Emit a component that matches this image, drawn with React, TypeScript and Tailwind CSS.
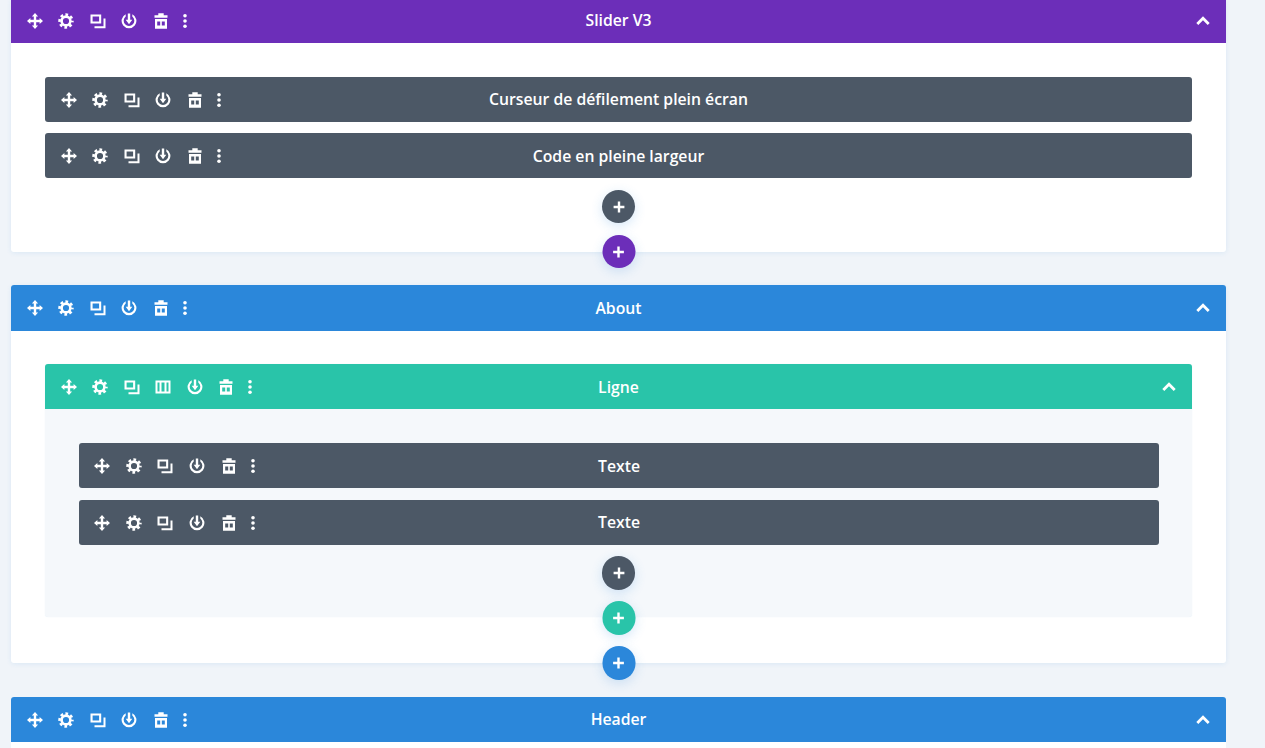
import type { ReactNode } from "react";

function Icon({ children }: { children: ReactNode }) {
  return <svg width="16" height="16" viewBox="0 0 16 16" fill="currentColor" className="block">{children}</svg>;
}

const MoveIcon = () => (
  <Icon>
    <path d="M6.800 3.400h2.400v3.400h3.400V4.900L16 8l-3.400 3.100V9.200H9.200v3.400h1.900L8 16l-3.100-3.400h1.900V9.200H3.400v1.900L0 8l3.400-3.100v1.900h3.400V3.400H4.900L8 0l3.100 3.400H9.200z" />
  </Icon>
);
const GearIcon = () => (
  <Icon>
    <circle cx="8" cy="8" r="4.400" fill="none" stroke="currentColor" strokeWidth="2.600" />
    <circle cx="8" cy="8" r="6.400" fill="none" stroke="currentColor" strokeWidth="2.600" strokeDasharray="2.700 2.326" strokeDashoffset="1.350" />
  </Icon>
);
const CopyIcon = () => (
  <Icon>
    <path fillRule="evenodd" d="M.5 1.500h10.700v9H.5zm2.100 2v5h6.500v-5z" />
    <path d="M13.500 5.500h2v9.800H4.500v-2h9z" />
  </Icon>
);
const ColumnsIcon = () => (
  <Icon>
    <path fillRule="evenodd" d="M.5 1.500h15v13H.5zm2 2v9h2v-9zm4 0v9h3v-9zm5 0v9h2v-9z" />
  </Icon>
);
const PowerIcon = () => (
  <Icon>
    <path d="M4.700 1.300v2.200a5.300 5.300 0 1 0 6.600 0V1.300a7.400 7.400 0 1 1-6.600 0z" />
    <path d="M6.800.5h2.400v6.300h2.100L8 11.300 4.700 6.800h2.100z" />
  </Icon>
);
const TrashIcon = () => (
  <Icon>
    <path d="M5.300.3h5.400v2h3.800v2.400h-13V2.300h3.800z" />
    <path fillRule="evenodd" d="M2 6h12v9.700H2zm2.200 2.600v3.900h3V8.600zm4.600 0v3.900h3V8.600z" />
  </Icon>
);
const DotsIcon = () => (
  <Icon>
    <circle cx="8" cy="2.700" r="1.800" />
    <circle cx="8" cy="8" r="1.800" />
    <circle cx="8" cy="13.300" r="1.800" />
  </Icon>
);
const ChevronIcon = () => (
  <svg width="16" height="16" viewBox="0 0 16 16" fill="none" stroke="currentColor" strokeWidth="2.800" className="block">
    <path d="M2.300 11 8 5.300l5.700 5.700" />
  </svg>
);

function Tool({ children, w }: { children: ReactNode; w: string }) {
  return <span className={`flex justify-center ${w}`}>{children}</span>;
}

function Toolbar({ columns = false, wide = false }: { columns?: boolean; wide?: boolean }) {
  const w = wide ? "w-[31.800px]" : "w-[31.500px]";
  return (
    <div className="flex items-center text-white">
      <Tool w={w}><MoveIcon /></Tool>
      <Tool w={w}><GearIcon /></Tool>
      <Tool w={w}><CopyIcon /></Tool>
      {columns && <Tool w={w}><ColumnsIcon /></Tool>}
      <Tool w={w}><PowerIcon /></Tool>
      <Tool w={w}><TrashIcon /></Tool>
      <span className="flex w-[16px] justify-center"><DotsIcon /></span>
    </div>
  );
}

function Bar({ title, tone, columns, rounded, indent = "pl-2", wide, collapse, high, h = "h-[45px]" }: { title: string; tone: string; columns?: boolean; rounded?: boolean; indent?: string; wide?: boolean; collapse?: boolean; high?: boolean; h?: string }) {
  return (
    <div className={`grid shrink-0 grid-cols-[1fr_auto_1fr] items-center ${h} ${tone} ${rounded ? "rounded-t-[3px]" : ""}`}>
      <div className={indent}><Toolbar columns={columns} wide={wide} /></div>
      <span className={`text-[15.750px] font-semibold text-white ${high ? "" : "pt-[2px]"}`}>{title}</span>
      {collapse ? <span className="flex justify-end pr-[15px] text-white"><ChevronIcon /></span> : <span />}
    </div>
  );
}

function Module({ title, wide, high }: { title: string; wide?: boolean; high?: boolean }) {
  return (
    <div className="overflow-hidden rounded-[3px]">
      <Bar title={title} tone="bg-[#4c5866]" indent={wide ? "pl-[7px]" : "pl-2"} wide={wide} high={high} />
    </div>
  );
}

function AddButton({ tone, place = "", size = "h-[33px] w-[33px]" }: { tone: string; place?: string; size?: string }) {
  return (
    <span className={`z-10 flex items-center justify-center rounded-full text-white shadow-[0_3px_12px_rgba(43,135,218,0.2)] ${size} ${tone} ${place}`}>
      <svg width="12" height="12" viewBox="0 0 12 12" fill="currentColor" className="block">
        <path d="M4.800.6h2.400v4.200h4.200v2.400H7.200v4.200H4.800V7.200H.6V4.800h4.200z" />
      </svg>
    </span>
  );
}

export default function App() {
  return (
    <div className="h-[748px] overflow-hidden bg-[#f0f4f9] pl-[11px] [font-family:'Open_Sans',sans-serif]">
      <div className="-mt-[2px] flex w-[1215px] flex-col gap-[33px]">
        <section className="relative rounded-[3px] bg-white shadow-[0_1px_5px_rgba(43,135,218,0.1)]">
          <Bar title="Slider V3" tone="bg-[#6c2eb9]" collapse high />
          <div className="px-[34px] pt-[34px] pb-[29px]">
            <div className="flex flex-col gap-[11px]">
              <Module title="Curseur de défilement plein écran" high />
              <Module title="Code en pleine largeur" />
            </div>
            <div className="mt-[12px] flex justify-center"><AddButton tone="bg-[#4c5866]" /></div>
          </div>
          <AddButton tone="bg-[#6c2eb9]" place="absolute bottom-[-16px] left-1/2 -translate-x-1/2" />
        </section>

        <section className="relative rounded-[3px] bg-white shadow-[0_1px_5px_rgba(43,135,218,0.1)]">
          <Bar title="About" tone="bg-[#2b87da]" rounded collapse h="h-[46px]" />
          <div className="px-[34px] pt-[33px] pb-[46px]">
            <div className="relative rounded-[3px] bg-[#f5f8fb] shadow-[0_0_1px_rgba(43,135,218,0.12)]">
              <Bar title="Ligne" tone="bg-[#29c4a9]" columns rounded collapse />
              <div className="pt-[34px] pr-[33px] pb-[27px] pl-[34px]">
                <div className="flex flex-col gap-[12px]">
                  <Module title="Texte" wide />
                  <Module title="Texte" wide high />
                </div>
                <div className="mt-[11px] flex justify-center pr-px"><AddButton tone="bg-[#4c5866]" size="h-[34px] w-[33px]" /></div>
              </div>
              <AddButton tone="bg-[#29c4a9]" size="h-[34px] w-[33px]" place="absolute bottom-[-18px] left-1/2 -translate-x-1/2" />
            </div>
          </div>
          <AddButton tone="bg-[#2b87da]" size="h-[34px] w-[33px]" place="absolute bottom-[-17px] left-1/2 -translate-x-1/2" />
        </section>

        <section className="mt-px rounded-[3px] bg-white">
          <Bar title="Header" tone="bg-[#2b87da]" rounded collapse high />
          <div className="h-[40px]" />
        </section>
      </div>
    </div>
  );
}
